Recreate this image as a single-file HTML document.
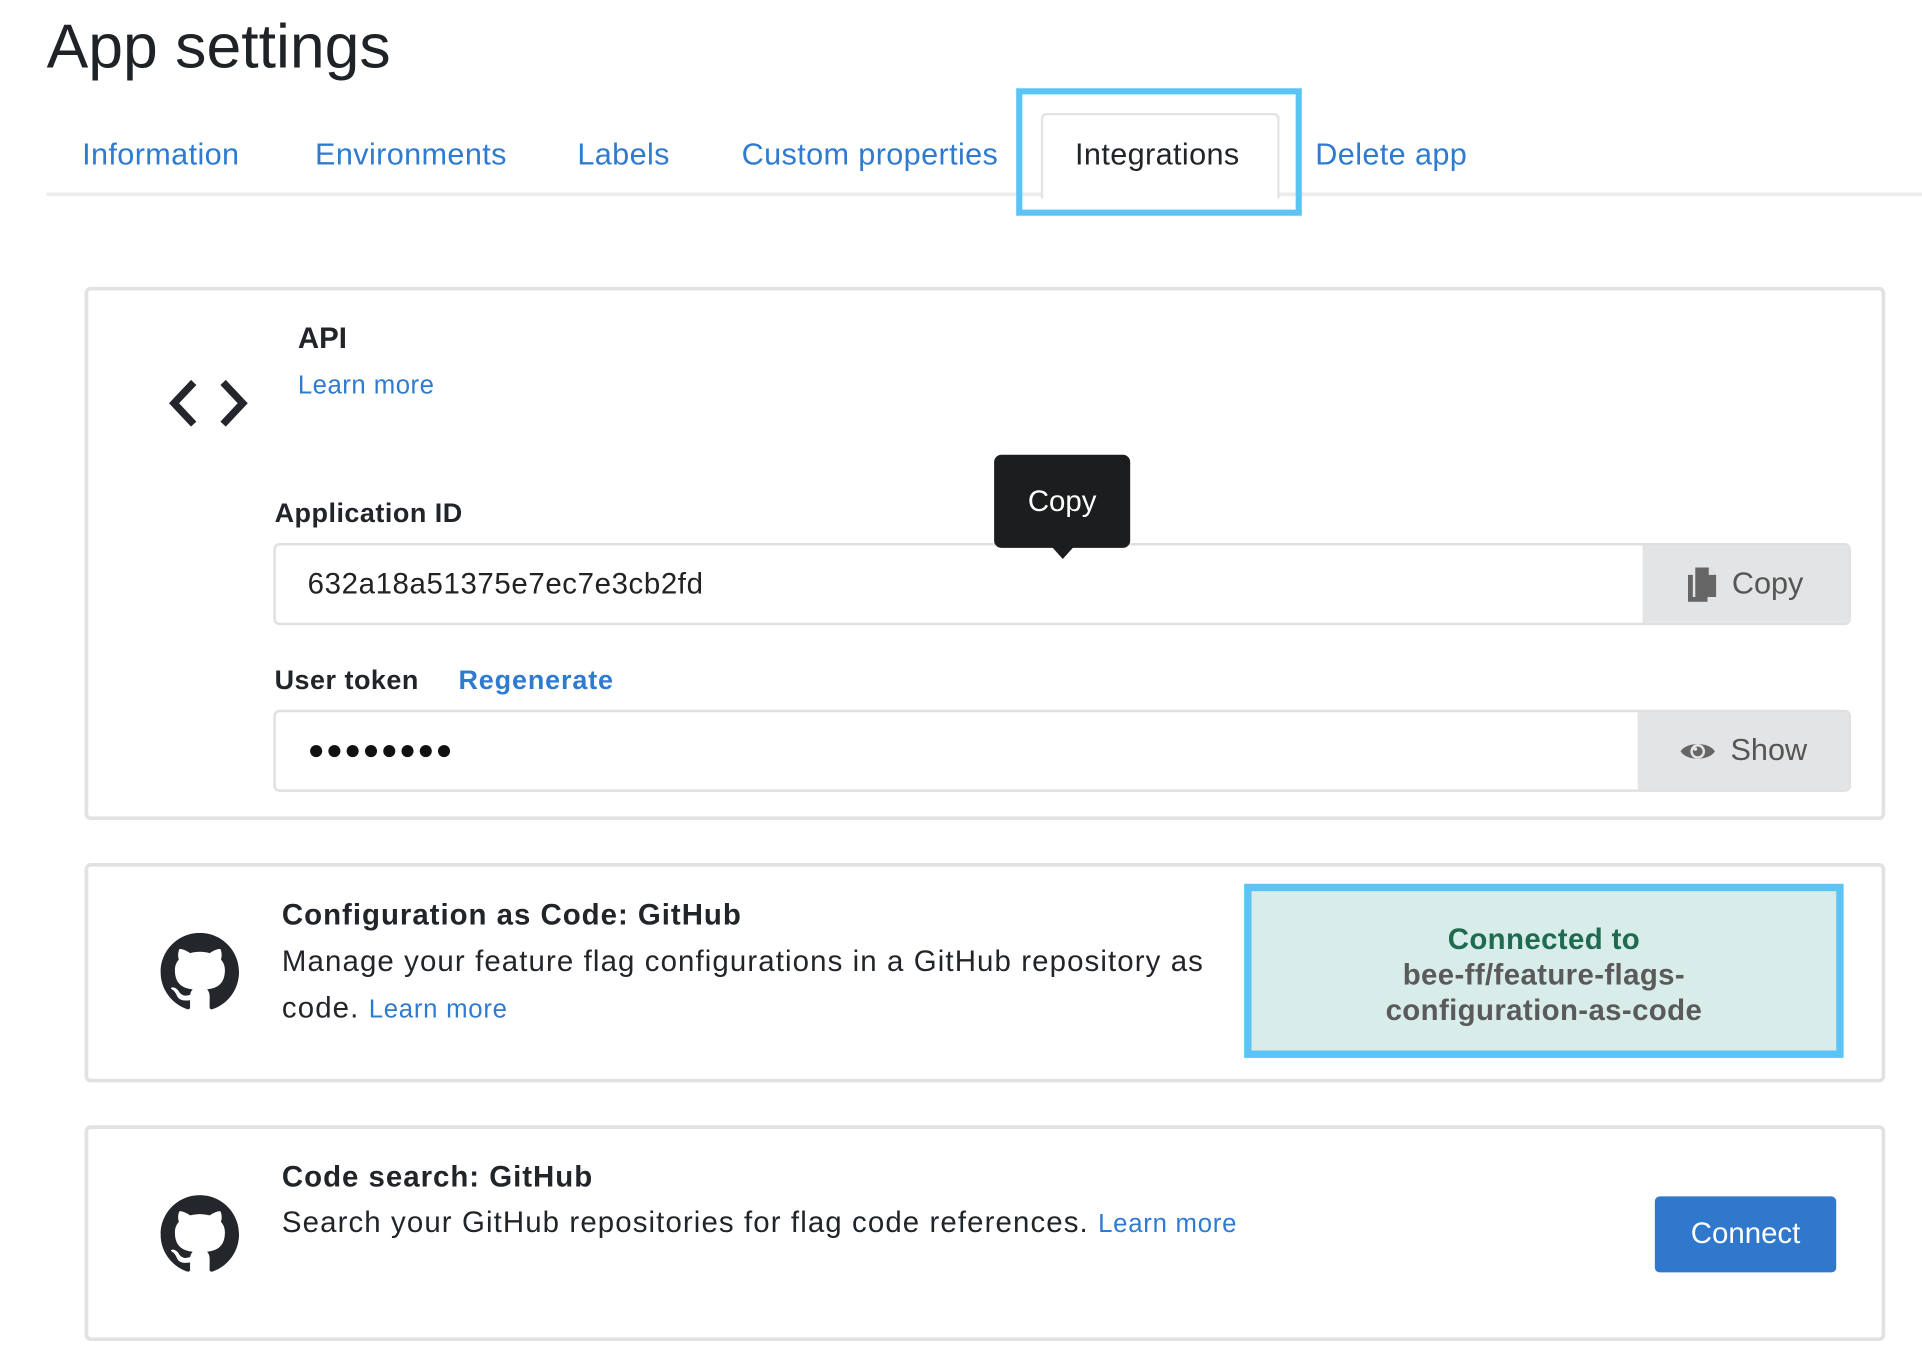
<!DOCTYPE html>
<html><head><meta charset="utf-8">
<style>
*{box-sizing:border-box;margin:0;padding:0}
html,body{width:1922px;height:1370px;overflow:hidden;background:#fff}
#w{position:absolute;left:0;top:0;width:1568px;height:1118px;transform:scale(1.2258);transform-origin:0 0;font-family:"Liberation Sans",sans-serif;color:#212529}
.a{position:absolute;white-space:nowrap}
.tab{position:absolute;top:112px;font-size:25px;color:#2f7bd0;letter-spacing:0.3px}
.card{position:absolute;left:69px;width:1469px;border:3px solid #e2e2e2;border-radius:5px;background:#fff}
.lbl{font-weight:bold;font-size:22px;letter-spacing:0.4px}
.inp{position:absolute;left:223px;width:1287px;height:67px;border:2px solid #e0e0e0;border-radius:5px;background:#fff;overflow:hidden}
.btn{position:absolute;right:0;top:-2px;bottom:-2px;background:#e3e4e5;color:#555;font-size:25px;display:flex;align-items:center;justify-content:center;gap:12px}
.blue{color:#2f7bd0}
</style></head><body><div id="w">
<div class="a" style="left:38px;top:8px;font-size:51px;color:#1f2328">App settings</div>
<div class="a" style="left:38px;top:157px;width:1530px;height:3px;background:#ececec"></div>
<div class="tab" style="left:67px">Information</div>
<div class="tab" style="left:257px">Environments</div>
<div class="tab" style="left:471px">Labels</div>
<div class="tab" style="left:605px">Custom properties</div>
<div class="a" style="left:849px;top:92px;width:195px;height:70px;border:2px solid #e3e3e3;border-bottom:none;border-radius:5px 5px 0 0;background:#fff"></div>
<div class="tab" style="left:877px;color:#212529">Integrations</div>
<div class="tab" style="left:1073px">Delete app</div>
<div class="a" style="left:829px;top:72px;width:233px;height:104px;border:5px solid #5bc4f5"></div>

<div class="card" style="top:234px;height:435px"></div>
<svg class="a" style="left:136px;top:308px" width="68" height="42" viewBox="0 0 68 42"><path d="M22 4 L6 21 L22 38 M46 4 L62 21 L46 38" fill="none" stroke="#23272b" stroke-width="6"/></svg>
<div class="a" style="left:243px;top:263px;font-size:24px;font-weight:bold">API</div>
<div class="a blue" style="left:243px;top:303px;font-size:21px;letter-spacing:0.4px">Learn more</div>
<div class="a lbl" style="left:224px;top:406px">Application ID</div>
<div class="inp" style="top:443px"><div class="a" style="left:26px;top:18px;font-size:24px;color:#222;letter-spacing:0.5px">632a18a51375e7ec7e3cb2fd</div>
<div class="btn" style="width:168px"><svg width="24" height="28" viewBox="0 0 24 28"><path d="M0 6h4v18h12v4H0z M6 0h11l6 6v18H6z" fill="#666"/><path d="M17 0v6h6" fill="#e3e4e5"/></svg>Copy</div></div>
<div class="a" style="left:811px;top:371px;width:111px;height:76px;background:#1c1d1e;border-radius:6px;color:#fff;font-size:24px;text-align:center;line-height:78px">Copy</div>
<div class="a" style="left:858px;top:446px;width:0;height:0;border-left:9px solid transparent;border-right:9px solid transparent;border-top:10px solid #1c1d1e"></div>
<div class="a lbl" style="left:224px;top:542px">User token</div>
<div class="a lbl blue" style="left:374px;top:542px;letter-spacing:0.7px">Regenerate</div>
<div class="inp" style="top:579px"><div class="a" style="left:26px;top:17px;font-size:23px;letter-spacing:1px;color:#111">●●●●●●●●</div>
<div class="btn" style="width:172px"><svg width="30" height="20" viewBox="0 0 30 20"><path d="M1 10C6 2 24 2 29 10C24 18 6 18 1 10Z" fill="#666"/><circle cx="15" cy="10" r="6" fill="#e3e4e5"/><circle cx="15" cy="10" r="4" fill="#666"/><circle cx="13" cy="8" r="1.5" fill="#e3e4e5"/></svg>Show</div></div>

<div class="card" style="top:704px;height:179px"></div>
<svg class="a" style="left:131px;top:761px" width="64" height="64" viewBox="0 0 16 16"><path fill="#23272b" d="M8 0C3.58 0 0 3.58 0 8c0 3.54 2.29 6.53 5.47 7.59.4.07.55-.17.55-.38 0-.19-.01-.82-.01-1.49-2.01.37-2.53-.49-2.69-.94-.09-.23-.48-.94-.82-1.13-.28-.15-.68-.52-.01-.53.63-.01 1.08.58 1.23.82.72 1.21 1.87.87 2.33.66.07-.52.28-.87.51-1.07-1.78-.2-3.64-.89-3.64-3.95 0-.87.31-1.59.82-2.15-.08-.2-.36-1.02.08-2.12 0 0 .67-.21 2.2.82.64-.18 1.32-.27 2-.27.68 0 1.360.09 2 .27 1.53-1.04 2.2-.82 2.2-.82.44 1.1.16 1.92.08 2.12.51.56.82 1.27.82 2.15 0 3.07-1.87 3.75-3.65 3.95.29.25.54.73.54 1.48 0 1.07-.01 1.93-.01 2.2 0 .21.15.46.55.38A8.013 8.013 0 0016 8c0-4.42-3.58-8-8-8z"/></svg>
<div class="a" style="left:230px;top:733px;font-size:24px;font-weight:bold;letter-spacing:0.8px">Configuration as Code: GitHub</div>
<div class="a" style="left:230px;top:766px;font-size:24px;line-height:38px;letter-spacing:0.9px">Manage your feature flag configurations in a GitHub repository as<br>code. <span class="blue" style="font-size:21px;letter-spacing:0.6px">Learn more</span></div>
<div class="a" style="left:1015px;top:721px;width:489px;height:142px;border:6px solid #5bc4f5;background:#d8ede9;text-align:center;font-size:24px;font-weight:bold;line-height:29px;padding-top:25px;letter-spacing:0.3px"><span style="color:#1e6b50">Connected to</span><br><span style="color:#5a5a5a">bee-ff/feature-flags-<br>configuration-as-code</span></div>

<div class="card" style="top:918px;height:176px"></div>
<svg class="a" style="left:131px;top:975px" width="64" height="64" viewBox="0 0 16 16"><path fill="#23272b" d="M8 0C3.58 0 0 3.58 0 8c0 3.54 2.29 6.53 5.47 7.59.4.07.55-.17.55-.38 0-.19-.01-.82-.01-1.49-2.01.37-2.53-.49-2.69-.94-.09-.23-.48-.94-.82-1.13-.28-.15-.68-.52-.01-.53.63-.01 1.08.58 1.23.82.72 1.21 1.87.87 2.33.66.07-.52.28-.87.51-1.07-1.78-.2-3.64-.89-3.64-3.95 0-.87.31-1.59.82-2.15-.08-.2-.36-1.02.08-2.12 0 0 .67-.21 2.2.82.64-.18 1.32-.27 2-.27.68 0 1.36.09 2 .27 1.53-1.04 2.2-.82 2.2-.82.44 1.1.16 1.92.08 2.12.51.56.82 1.27.82 2.15 0 3.07-1.87 3.75-3.65 3.95.29.25.54.73.54 1.48 0 1.07-.01 1.93-.01 2.2 0 .21.15.46.55.38A8.013 8.013 0 0016 8c0-4.42-3.58-8-8-8z"/></svg>
<div class="a" style="left:230px;top:947px;font-size:24px;font-weight:bold;letter-spacing:0.8px">Code search: GitHub</div>
<div class="a" style="left:230px;top:984px;font-size:24px;letter-spacing:0.9px">Search your GitHub repositories for flag code references. <span class="blue" style="font-size:21px;letter-spacing:0.6px">Learn more</span></div>
<div class="a" style="left:1350px;top:976px;width:148px;height:62px;background:#2f78cc;border-radius:4px;color:#fff;font-size:24px;text-align:center;line-height:62px">Connect</div>
</div></body></html>
